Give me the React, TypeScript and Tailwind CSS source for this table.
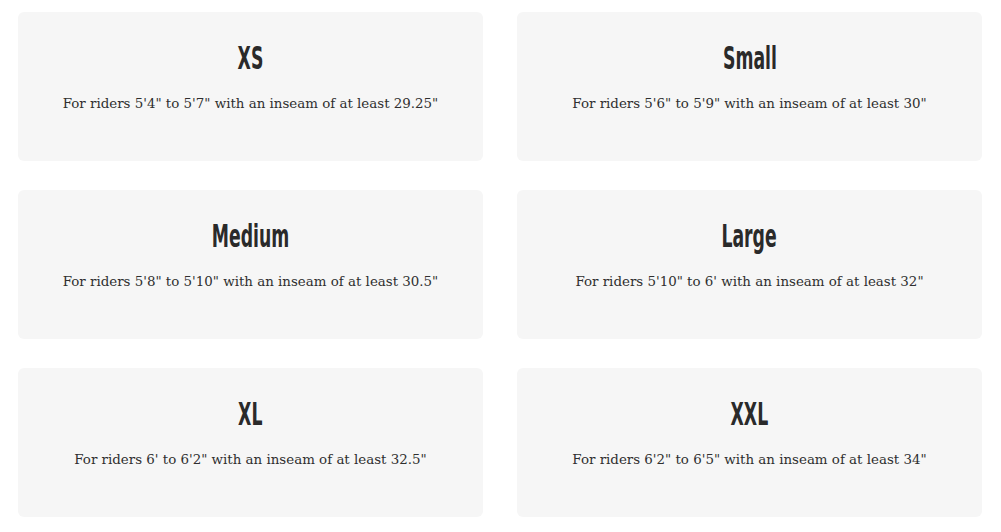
import React from 'react';

const sizes = [
  { name: 'XS', text: `For riders 5'4" to 5'7" with an inseam of at least 29.25"` },
  { name: 'Small', text: `For riders 5'6" to 5'9" with an inseam of at least 30"` },
  { name: 'Medium', text: `For riders 5'8" to 5'10" with an inseam of at least 30.5"` },
  { name: 'Large', text: `For riders 5'10" to 6' with an inseam of at least 32"` },
  { name: 'XL', text: `For riders 6' to 6'2" with an inseam of at least 32.5"` },
  { name: 'XXL', text: `For riders 6'2" to 6'5" with an inseam of at least 34"` },
];

const App: React.FC = () => {
  return (
    <div className="min-h-screen bg-white pt-3 pl-[18px] pr-[19px]">
      <div className="grid grid-cols-2 gap-x-[34px] gap-y-[29px]">
        {sizes.map((s) => (
          <div key={s.name} className="h-[149px] rounded-md bg-[#f6f6f6] flex flex-col items-center pt-[30px]">
            <h2
              className="text-[32px] leading-[32px] font-bold text-[#2a2a2a] scale-x-[0.6]"
              style={{ fontFamily: '"DejaVu Sans Condensed", "DejaVu Sans", sans-serif' }}
            >
              {s.name}
            </h2>
            <p className="mt-[20px] text-[13.4px] leading-5 text-[#2f2f2f]" style={{ fontFamily: '"DejaVu Serif", serif' }}>
              {s.text}
            </p>
          </div>
        ))}
      </div>
    </div>
  );
};

export default App;
